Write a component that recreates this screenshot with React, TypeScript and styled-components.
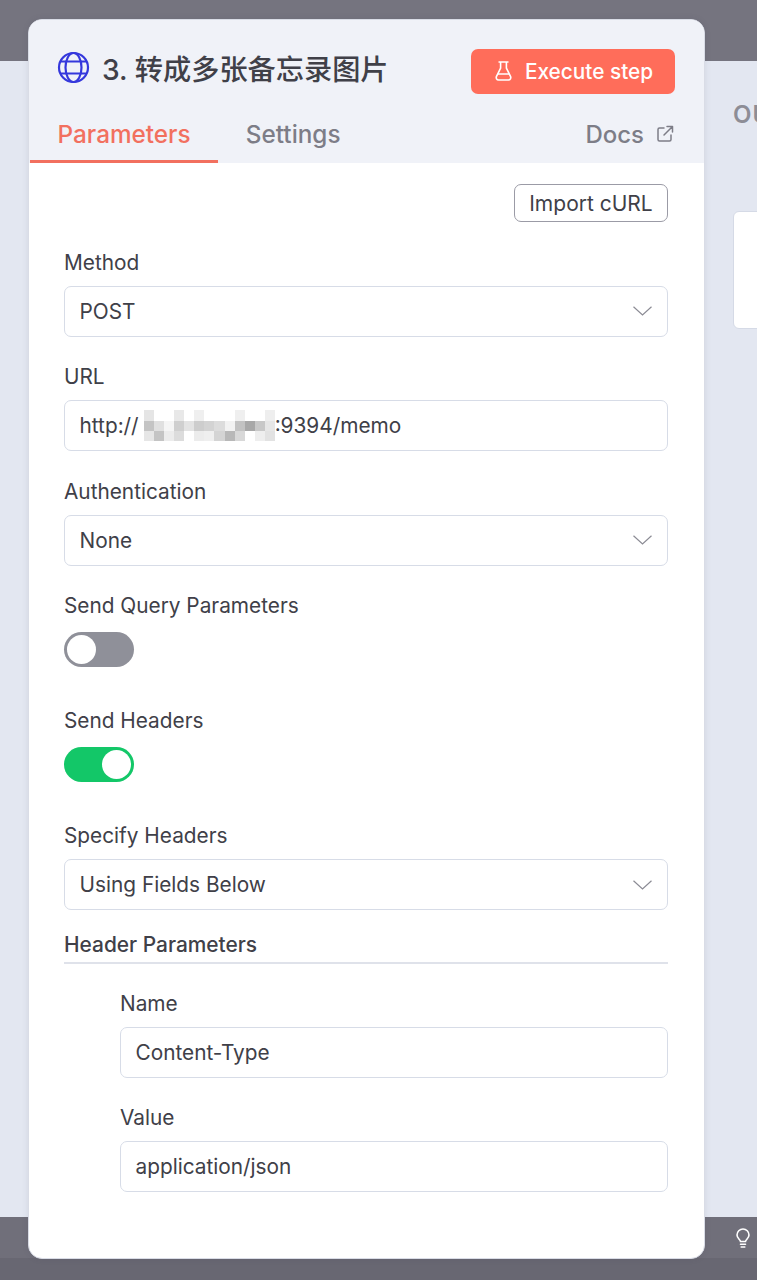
import styled, {createGlobalStyle} from "styled-components";

const GlobalStyle = createGlobalStyle`
    html, body {
        margin: 0;
        padding: 0;
    }

    body {
        width: 757px;
        height: 1280px;
        overflow: hidden;
        font-family: Inter, "Noto Sans CJK SC", sans-serif;
    }
`

// the blurred out host in the URL field, one grey per cell
const mosaic = [
    ["#e5e5e5", "", "", "#e8e8e8", "", "#efefef", "", "", "", "#efefef", "", "", "#eeeeee"],
    ["#c4c4c4", "#e0e0e0", "#f5f5f5", "#cfcfcf", "#e3e3e3", "#cdcdcd", "#d3d3d3", "#dcdcdc", "#f2f2f2", "#c2c2c2", "#a8a8a8", "#c8c8c8", "#e6e6e6"],
    ["#e6e6e6", "#c4c4c4", "#ececec", "#dcdcdc", "", "#ececec", "#efefef", "#d4d4d4", "#b8b8b8", "#d8d8d8", "", "#eeeeee", "#e2e2e2"],
]

function GlobeIcon() {
    return <svg width="33" height="33" viewBox="0 0 33 33" fill="none" stroke="#3538dc" strokeWidth="2.2">
        <circle cx="16.5" cy="16.5" r="14.5"/>
        <ellipse cx="16.5" cy="16.5" rx="8" ry="14.5"/>
        <path d="M3.6 10.5h25.8M3.600 22.5h25.800"/>
    </svg>
}

function FlaskIcon() {
    return <svg width="17" height="20" viewBox="0 0 17 20" fill="none" stroke="#fff" strokeWidth="1.6" strokeLinejoin="round">
        <path d="M3.5 1h10M5.600 1v6.200L1.500 15.400c-.8 1.700.2 3.600 2.100 3.600h9.800c1.900 0 2.900-1.900 2.100-3.600l-4.100-8.200V1"/>
        <path d="M3 13h11"/>
    </svg>
}

function ExternalIcon() {
    return <svg width="18" height="18" viewBox="0 0 18 18" fill="none" stroke="#7d7d87" strokeWidth="1.5" strokeLinecap="round" strokeLinejoin="round">
        <path d="M8 3H3.500A1.500 1.500 0 0 0 2 4.500v10A1.500 1.500 0 0 0 3.500 16h10a1.500 1.500 0 0 0 1.500-1.500V10"/>
        <path d="M11 1.500h5.500V7M16.500 1.500 8 10"/>
    </svg>
}

function Chevron() {
    return <svg width="19" height="10" viewBox="0 0 19 10" fill="none" stroke="#8b8b94" strokeWidth="1.2">
        <path d="M.5 .8 9.500 9 18.500 .8"/>
    </svg>
}

function BulbIcon() {
    return <svg width="14" height="20" viewBox="0 0 14 20" fill="none" stroke="#fff" strokeWidth="1.6" strokeLinecap="round">
        <path d="M4.500 13.500C4.300 11.500 1 10.500 1 7a6 6 0 0 1 12 0c0 3.500-3.300 4.500-3.500 6.500z"/>
        <path d="M4.500 16.300h5M5.200 19h3.600"/>
    </svg>
}

function Mosaic() {
    return <svg width="134" height="32" viewBox="0 0 134 32" shapeRendering="crispEdges">
        {mosaic.map((row, y) => row.map((fill, x) => fill
            ? <rect key={`${x}-${y}`} x={x * 10.3} y={y * 10.5} width="10.3" height="10.5" fill={fill}/>
            : null))}
    </svg>
}

function Select({value}: {value: string}) {
    return <InputBox>
        <span>{value}</span>
        <Chevron/>
    </InputBox>
}

export default function App() {
    return <>
        <GlobalStyle/>
        <Page>
            <TopBar/>
            <Canvas>
                <OutputLabel>OUTPUT</OutputLabel>
                <OutputCard/>
            </Canvas>
            <BottomBar>
                <BulbIcon/>
            </BottomBar>
            <Footer/>

            <Panel>
                <Header>
                    <TitleRow>
                        <Title>
                            <GlobeIcon/>
                            <TitleText>3. 转成多张备忘录图片</TitleText>
                        </Title>
                        <ExecuteButton>
                            <FlaskIcon/>
                            Execute step
                        </ExecuteButton>
                    </TitleRow>
                    <Tabs>
                        <Tab $active>Parameters</Tab>
                        <Tab>Settings</Tab>
                        <DocsLink>Docs <ExternalIcon/></DocsLink>
                    </Tabs>
                </Header>
                <Body>
                    <ImportRow>
                        <ImportButton>Import cURL</ImportButton>
                    </ImportRow>
                    <Field>
                        <Label>Method</Label>
                        <Select value="POST"/>
                    </Field>
                    <Field>
                        <Label>URL</Label>
                        <InputBox>
                            <UrlText>http://<MosaicSlot><Mosaic/></MosaicSlot>:9394/memo</UrlText>
                        </InputBox>
                    </Field>
                    <Field>
                        <Label>Authentication</Label>
                        <Select value="None"/>
                    </Field>
                    <ToggleField>
                        <Label>Send Query Parameters</Label>
                        <Toggle/>
                    </ToggleField>
                    <ToggleField>
                        <Label>Send Headers</Label>
                        <Toggle $on/>
                    </ToggleField>
                    <Field>
                        <Label>Specify Headers</Label>
                        <Select value="Using Fields Below"/>
                    </Field>
                    <SectionTitle>Header Parameters</SectionTitle>
                    <Nested>
                        <Field>
                            <Label>Name</Label>
                            <InputBox>Content-Type</InputBox>
                        </Field>
                        <Field>
                            <Label>Value</Label>
                            <InputBox>application/json</InputBox>
                        </Field>
                    </Nested>
                </Body>
            </Panel>
        </Page>
    </>
}

const Page = styled.div`
    position: relative;
    width: 757px;
    height: 1280px;
    display: flex;
    flex-direction: column;
    overflow: hidden;
`

const TopBar = styled.div`
    height: 61px;
    background: #75747f;
`

const Canvas = styled.div`
    height: 1156px;
    background: #e3e7f1;
    padding: 39px 0 0 733px;
    box-sizing: border-box;
    overflow: hidden;
`

const OutputLabel = styled.div`
    font-size: 24px;
    font-weight: 600;
    line-height: 29px;
    color: #8d8d96;
    letter-spacing: 1px;
    white-space: nowrap;
`

const OutputCard = styled.div`
    width: 60px;
    height: 118px;
    margin-top: 82px;
    background: #fff;
    border: 1px solid #d5dae6;
    border-radius: 6px;
    box-sizing: border-box;
`

const BottomBar = styled.div`
    height: 41px;
    background: #706f7a;
    display: flex;
    justify-content: flex-end;
    align-items: center;
    padding-right: 7px;
`

const Footer = styled.div`
    flex: 1;
    background: #686772;
`

const Panel = styled.div`
    position: absolute;
    left: 28px;
    top: 19px;
    width: 677px;
    height: 1240px;
    box-sizing: border-box;
    border: 1px solid #d9dce6;
    border-radius: 14px;
    box-shadow: 0 0 6px rgba(60, 60, 80, .1);
    overflow: hidden;
    background: #fff;
    display: flex;
    flex-direction: column;
`

const Header = styled.div`
    height: 143px;
    background: #f0f2f8;
    display: flex;
    flex-direction: column;
    flex-shrink: 0;
`

const TitleRow = styled.div`
    height: 91px;
    display: flex;
    align-items: flex-start;
    justify-content: space-between;
    padding: 29px 29px 0 28px;
    box-sizing: border-box;
`

const Title = styled.div`
    height: 37px;
    display: flex;
    align-items: center;
    gap: 12px;
`

const TitleText = styled.div`
    font-size: 28.2px;
    font-weight: 500;
    color: #404048;
`

const ExecuteButton = styled.button`
    width: 204px;
    height: 45px;
    padding: 0 0 1px 2px;
    border: none;
    border-radius: 7px;
    background: #ff6d5a;
    color: #fff;
    font-family: inherit;
    font-size: 20.8px;
    font-weight: 500;
    display: flex;
    align-items: center;
    justify-content: center;
    gap: 13px;
`

const Tabs = styled.div`
    flex: 1;
    display: flex;
    align-items: stretch;
    padding-left: 1px;
`

const Tab = styled.div<{$active?: boolean}>`
    padding: 0 27.6px 3px;
    margin-right: ${p => p.$active ? "0" : "auto"};
    display: flex;
    align-items: center;
    box-sizing: border-box;
    font-size: 24.3px;
    font-weight: 500;
    color: ${p => p.$active ? "#f2705f" : "#7d7d87"};
    border-bottom: 3px solid ${p => p.$active ? "#f2705f" : "transparent"};
`

const DocsLink = styled.div`
    display: flex;
    align-items: center;
    gap: 12px;
    padding: 0 30px 6px 0;
    font-size: 24px;
    font-weight: 500;
    color: #7d7d87;
`

const Body = styled.div`
    flex: 1;
    padding: 21px 36px 0 35px;
    display: flex;
    flex-direction: column;
`

const ImportRow = styled.div`
    display: flex;
    justify-content: flex-end;
    margin-bottom: 15.5px;
`

const ImportButton = styled.button`
    width: 154px;
    height: 38px;
    padding: 0;
    background: #fff;
    border: 1.5px solid #9b9ba6;
    border-radius: 7px;
    font-family: inherit;
    font-size: 21px;
    font-weight: 400;
    color: #404048;
`

const Field = styled.div`
    margin-bottom: 15.5px;
`

const Label = styled.div`
    font-size: 20.8px;
    line-height: 25px;
    height: 25px;
    margin: 12px 0 11px;
    color: #404048;
`

const InputBox = styled.div`
    height: 51px;
    box-sizing: border-box;
    padding: 0 15px 0 14.5px;
    background: #fff;
    border: 1.5px solid #d7dce7;
    border-radius: 7px;
    display: flex;
    align-items: center;
    justify-content: space-between;
    font-size: 20.8px;
    color: #404048;
`

const UrlText = styled.div`
    display: flex;
    align-items: center;
`

const MosaicSlot = styled.span`
    display: flex;
    width: 131px;
    height: 32px;
    margin-left: 5px;
`

const ToggleField = styled.div`
    height: 115px;
`

const Toggle = styled.div<{$on?: boolean}>`
    position: relative;
    width: 70px;
    height: 35px;
    margin-top: 14px;
    border-radius: 18px;
    background: ${p => p.$on ? "#13c768" : "#8f9099"};

    &::after {
        content: "";
        position: absolute;
        top: 3px;
        left: ${p => p.$on ? "38px" : "3px"};
        width: 29px;
        height: 29px;
        border-radius: 50%;
        background: #fff;
    }
`

const SectionTitle = styled.div`
    font-size: 20.9px;
    font-weight: 500;
    line-height: 24px;
    height: 29px;
    margin-top: 7px;
    margin-bottom: 15px;
    color: #404048;
    border-bottom: 2px solid #dfe2ea;
`

const Nested = styled.div`
    padding-left: 56px;
    display: flex;
    flex-direction: column;
`
